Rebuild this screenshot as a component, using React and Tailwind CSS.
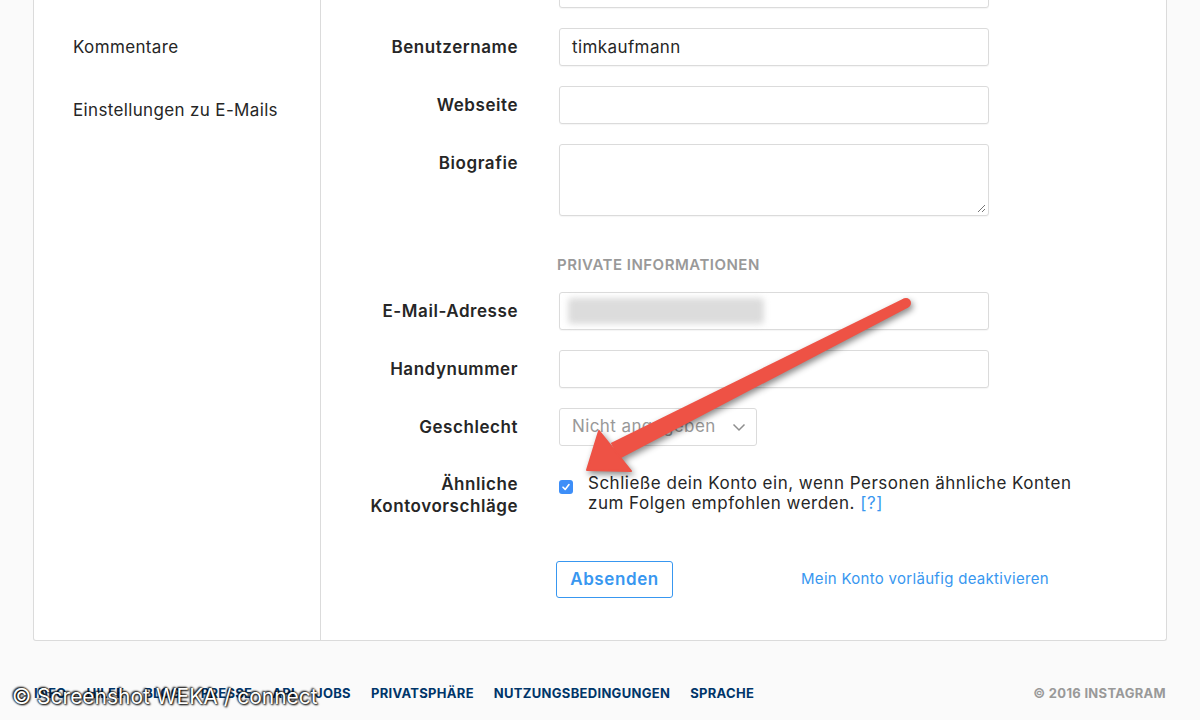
import React from "react";

const font = { fontFamily: 'Inter, "Liberation Sans", Arial, sans-serif' };

function Label({ children, lines }) {
  return (
    <div className="w-[197px] shrink-0 text-right font-semibold text-[17px] tracking-[0.55px] text-[#262626]">
      {lines ? (
        <div className="leading-[22px]">{children}</div>
      ) : (
        <div className="leading-[38px]">{children}</div>
      )}
    </div>
  );
}

function Input({ value, h = "h-[38px]", children }) {
  return (
    <div
      className={`relative w-[430px] ${h} rounded-[3px] border border-[#dbdbdb] bg-white shadow-[0_1px_1px_rgba(0,0,0,0.04)] px-[12px] text-[17px] leading-[36px] text-[#262626]`}
    >
      {value}
      {children}
    </div>
  );
}

export default function App() {
  const footerLinks = [
    "INFO",
    "HILFE",
    "BLOG",
    "PRESSE",
    "API",
    "JOBS",
    "PRIVATSPHÄRE",
    "NUTZUNGSBEDINGUNGEN",
    "SPRACHE",
  ];
  return (
    <div className="relative h-[720px] w-[1200px] overflow-hidden bg-[#fafafa] tracking-[0.4px]" style={font}>
      {/* Card */}
      <div className="mx-[33px] flex h-[641px] rounded-b-[3px] border-x border-b border-[#dbdbdb] bg-white">
        {/* Sidebar */}
        <div className="w-[287px] shrink-0 border-r border-[#dbdbdb] pl-[39px] pt-[36px] text-[17px] leading-[22px] tracking-[0.35px] text-[#262626]">
          <div>Kommentare</div>
          <div className="mt-[41px]">Einstellungen zu E-Mails</div>
        </div>
        {/* Main form */}
        <div className="flex flex-1 flex-col">
          <div className="-mt-[30px] flex gap-[41px]">
            <div className="w-[197px] shrink-0" />
            <Input />
          </div>
          <div className="mt-[20px] flex gap-[41px]">
            <Label>Benutzername</Label>
            <Input value="timkaufmann" />
          </div>
          <div className="mt-[20px] flex gap-[41px]">
            <Label>Webseite</Label>
            <Input />
          </div>
          <div className="mt-[20px] flex gap-[41px]">
            <Label>Biografie</Label>
            <Input h="h-[72px]">
              <svg className="absolute bottom-[2px] right-[2px]" width="9" height="9" viewBox="0 0 9 9">
                <line x1="1" y1="8" x2="8" y2="1" stroke="#777" strokeWidth="1" />
                <line x1="5" y1="8" x2="8" y2="5" stroke="#777" strokeWidth="1" />
              </svg>
            </Input>
          </div>
          <div className="mt-[40px] flex gap-[39px]">
            <div className="w-[197px] shrink-0" />
            <div className="text-[15px] font-semibold leading-[18px] tracking-[0.5px] text-[#999999]">PRIVATE INFORMATIONEN</div>
          </div>
          <div className="mt-[18px] flex gap-[41px]">
            <Label>E-Mail-Adresse</Label>
            <Input>
              <div className="absolute left-[8px] top-[5px] h-[26px] w-[196px] rounded-[4px] bg-[#dcdcdc] blur-[3px]" />
            </Input>
          </div>
          <div className="mt-[20px] flex gap-[41px]">
            <Label>Handynummer</Label>
            <Input />
          </div>
          <div className="mt-[20px] flex gap-[41px]">
            <Label>Geschlecht</Label>
            <div className="flex h-[38px] w-[198px] items-center justify-between rounded-[3px] border border-[#dbdbdb] bg-white pl-[12px] pr-[10px] text-[17px] text-[#999999]">
              <span>Nicht angegeben</span>
              <svg width="14" height="9" viewBox="0 0 14 9">
                <polyline points="1.5,1.5 7,7 12.5,1.5" fill="none" stroke="#8e8e8e" strokeWidth="1.5" />
              </svg>
            </div>
          </div>
          <div className="mt-[27px] flex gap-[41px]">
            <Label lines>
              Ähnliche
              <br />
              Kontovorschläge
            </Label>
            <div className="flex gap-[15px] pt-[7px]">
              <div className="flex h-[14px] w-[14px] shrink-0 items-center justify-center rounded-[3px] bg-[#3d8ef8]">
                <svg width="10" height="10" viewBox="0 0 10 10">
                  <polyline points="2,5.2 4.2,7.4 8,2.6" fill="none" stroke="white" strokeWidth="1.6" strokeLinecap="round" strokeLinejoin="round" />
                </svg>
              </div>
              <div className="-mt-[7px] text-[17px] leading-[20px] tracking-[0.5px] text-[#262626]">
                Schließe dein Konto ein, wenn Personen ähnliche Konten
                <br />
                zum Folgen empfohlen werden. <span className="text-[#3897f0]">[?]</span>
              </div>
            </div>
          </div>
          <div className="mt-[44px] flex items-center">
            <div className="w-[235px] shrink-0" />
            <button className="h-[37px] w-[117px] rounded-[3px] border border-[#3897f0] bg-white text-[17px] font-semibold tracking-[0.6px] text-[#3897f0]">
              Absenden
            </button>
            <span className="ml-[128px] text-[15px] tracking-[0.3px] text-[#3897f0]">Mein Konto vorläufig deaktivieren</span>
          </div>
        </div>
      </div>

      {/* Footer */}
      <div className="mx-[34px] mt-[44px] flex items-center justify-between text-[13px] font-bold leading-[16px] tracking-[0.3px]">
        <div className="flex gap-[20px] text-[#003569]">
          {footerLinks.map((l) => (
            <span key={l}>{l}</span>
          ))}
        </div>
        <span className="text-[#999999]">© 2016 INSTAGRAM</span>
      </div>

      {/* Annotation arrow */}
      <svg
        className="pointer-events-none absolute left-0 top-0"
        width="1200"
        height="720"
        viewBox="0 0 1200 720"
        style={{ filter: "drop-shadow(2px 3px 3px rgba(0,0,0,0.45))" }}
      >
        <polygon points="908.3,307.4 903.7,298.6 610.8,443 619.2,459" fill="#ee5245" />
        <circle cx="906" cy="303" r="5" fill="#ee5245" />
        <polygon points="587,470 599,431 631,471" fill="#ee5245" stroke="#ee5245" strokeWidth="2" strokeLinejoin="round" />
      </svg>

      {/* Watermark */}
      <div
        className="absolute left-[12px] top-[684px] text-[21px] leading-[26px] tracking-normal text-white"
        style={{ textShadow: "0 0 2px #000, 1px 1px 2px #000, -1px -1px 2px #000" }}
      >
        © Screenshot WEKA / connect
      </div>
    </div>
  );
}
